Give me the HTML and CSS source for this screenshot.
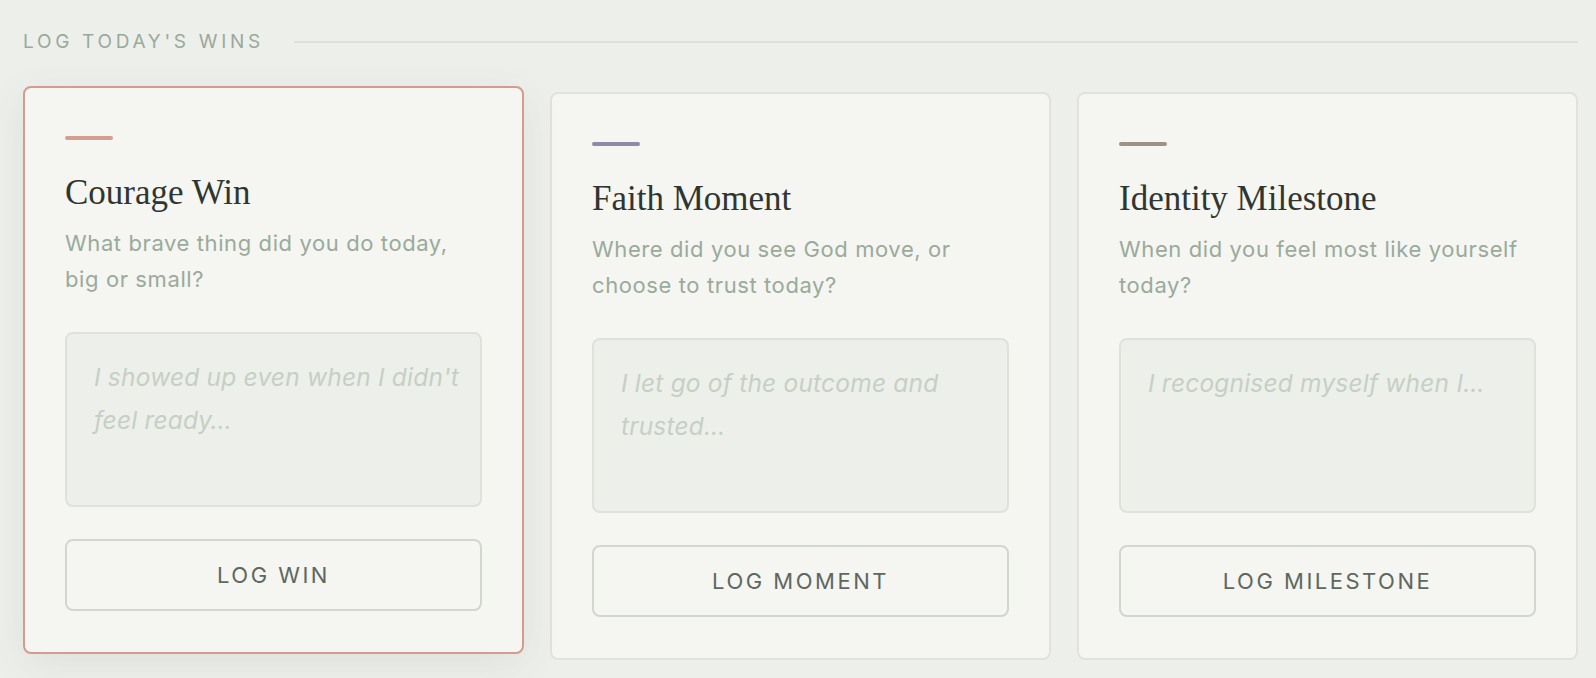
FILE: index.html
```html
<!DOCTYPE html>
<html lang="en">
<head>
<meta charset="utf-8">
<title>Log today's wins</title>
<link rel="stylesheet" href="styles.css">
</head>
<body>
<section class="wins">
  <header class="section-head">
    <h2 class="section-title">Log today's wins</h2>
    <span class="section-rule"></span>
  </header>
  <div class="cards">
    <article class="card card--courage is-active">
      <span class="accent"></span>
      <h3 class="card-title">Courage Win</h3>
      <p class="card-prompt">What brave thing did you do today, big or small?</p>
      <textarea class="card-input" placeholder="I showed up even when I didn't feel ready…"></textarea>
      <button class="card-btn" type="button">Log Win</button>
    </article>
    <article class="card card--faith">
      <span class="accent"></span>
      <h3 class="card-title">Faith Moment</h3>
      <p class="card-prompt">Where did you see God move, or choose to trust today?</p>
      <textarea class="card-input" placeholder="I let go of the outcome and trusted…"></textarea>
      <button class="card-btn" type="button">Log Moment</button>
    </article>
    <article class="card card--identity">
      <span class="accent"></span>
      <h3 class="card-title">Identity Milestone</h3>
      <p class="card-prompt">When did you feel most like yourself today?</p>
      <textarea class="card-input" placeholder="I recognised myself when I…"></textarea>
      <button class="card-btn" type="button">Log Milestone</button>
    </article>
  </div>
</section>
</body>
</html>
```

FILE: styles.css
```css
* { box-sizing: border-box; }

html, body {
  margin: 0;
  height: 100%;
}

body {
  background: #edefeb;
  font-family: "Inter", "Lato", sans-serif;
  overflow: hidden;
}

.wins {
  padding: 30px 18px 0 23px;
}

.section-head {
  display: flex;
  align-items: center;
  gap: 30px;
  margin-bottom: 38px;
}

.section-title {
  margin: 0;
  font-size: 19px;
  line-height: 24px;
  font-weight: 400;
  letter-spacing: 3.7px;
  text-transform: uppercase;
  color: #9aa99b;
  white-space: nowrap;
}

.section-rule {
  flex: 1;
  height: 2px;
  background: #dde0d9;
}

.cards {
  display: grid;
  grid-template-columns: repeat(3, 1fr);
  gap: 26px;
}

.card {
  display: flex;
  flex-direction: column;
  padding: 48px 40px 41px;
  background: #f5f5f2;
  border: 2px solid #e0e3dc;
  border-radius: 8px;
}

.card.is-active {
  border-color: #d59b8c;
  transform: translateY(-6px);
  box-shadow: 0 10px 40px rgba(70, 85, 70, 0.09);
}

.accent {
  display: block;
  width: 48px;
  height: 4px;
  border-radius: 2px;
  margin-bottom: 32px;
}

.card--courage .accent { background: #d59f8f; }
.card--faith .accent { background: #8d89ab; }
.card--identity .accent { background: #9b9383; }

.card-title {
  margin: 0 0 12px;
  font-family: "Liberation Serif", "DejaVu Serif", serif;
  font-size: 35px;
  line-height: 41px;
  font-weight: 400;
  color: #2f3631;
}

.card-prompt {
  margin: 0 0 35px;
  font-size: 22px;
  line-height: 36px;
  letter-spacing: 0.6px;
  color: #9aaa9b;
}

.card-input {
  display: block;
  width: 100%;
  height: 175px;
  margin: 0 0 32px;
  padding: 22px 18px 20px 27px;
  font-family: "Inter", "Lato", sans-serif;
  font-size: 24.5px;
  line-height: 43px;
  letter-spacing: 0.2px;
  color: #4a544c;
  background: #edefea;
  border: 2px solid #dfe2db;
  border-radius: 8px;
  resize: none;
  outline: none;
  overflow: hidden;
}

.card-input::placeholder {
  font-style: italic;
  color: #c6cfc6;
  opacity: 1;
}

.card-btn {
  display: block;
  width: 100%;
  height: 72px;
  padding: 0;
  font-family: "Inter", "Lato", sans-serif;
  font-size: 22px;
  letter-spacing: 2.5px;
  text-transform: uppercase;
  color: #5d685f;
  background: transparent;
  border: 2px solid #d1d7ce;
  border-radius: 8px;
  cursor: pointer;
}
```
